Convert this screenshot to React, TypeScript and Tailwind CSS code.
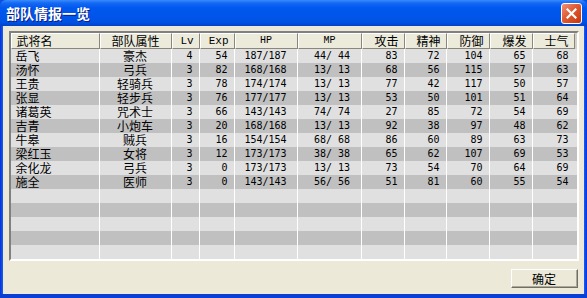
import React from "react";

type Row = [string, string, number, number, string, string, number, number, number, number, number];

const rows: Row[] = [
  ["岳飞", "豪杰", 4, 54, "187/187", " 44/ 44", 83, 72, 104, 65, 68],
  ["汤怀", "弓兵", 3, 82, "168/168", " 13/ 13", 68, 56, 115, 57, 63],
  ["王贵", "轻骑兵", 3, 78, "174/174", " 13/ 13", 77, 42, 117, 50, 57],
  ["张显", "轻步兵", 3, 76, "177/177", " 13/ 13", 53, 50, 101, 51, 64],
  ["诸葛英", "咒术士", 3, 66, "143/143", " 74/ 74", 27, 85, 72, 54, 69],
  ["吉青", "小炮车", 3, 20, "168/168", " 13/ 13", 92, 38, 97, 48, 62],
  ["牛皋", "贼兵", 3, 16, "154/154", " 68/ 68", 86, 60, 89, 63, 73],
  ["梁红玉", "女将", 3, 12, "173/173", " 38/ 38", 65, 62, 107, 69, 53],
  ["余化龙", "弓兵", 3, 0, "173/173", " 13/ 13", 73, 54, 70, 64, 69],
  ["施全", "医师", 3, 0, "143/143", " 56/ 56", 51, 81, 60, 55, 54],
];

const widths = ["w-[89px]", "w-[72px]", "w-[28px]", "w-[35px]", "w-[63px]", "w-[64px]", "w-[43px]", "w-[42px]", "w-[43px]", "w-[43px]", "w-[42px]"];
const aligns = ["l", "c", "r", "r", "c", "c", "r", "r", "r", "r", "r"];
const headers = ["武将名", "部队属性", "Lv", "Exp", "HP", "MP", "攻击", "精神", "防御", "爆发", "士气"];

const cjk = "font-['Noto_Sans_CJK_SC',sans-serif] text-[12px] leading-[12px]";
const num = "font-['DejaVu_Sans_Mono',monospace] text-[10px] leading-[10px]";
const latinHead = "font-['Liberation_Mono',monospace] text-[11px] leading-[11px]";
const smallHead = "font-['Liberation_Mono',monospace] text-[10px] leading-[10px]";

function alignClass(a: string, header: boolean) {
  if (a === "l") return "justify-start pl-[5px]";
  if (a === "c") return "justify-center";
  return header ? "justify-end pr-[5px]" : "justify-end pr-[6px]";
}

export default function App() {
  return (
    <div className="w-[587px] h-[298px] flex flex-col overflow-hidden bg-[#0b4ee0]">
      {/* Title bar */}
      <div className="h-[26px] flex items-center justify-between pl-[6px] pr-[5px] bg-[linear-gradient(to_bottom,#3b8cf9_0%,#1468f5_12%,#0058ee_30%,#0055ea_60%,#0052e4_85%,#0043c8_100%)] rounded-t-[6px]">
        <span className="text-white font-bold text-[14px] leading-[14px] font-['Noto_Sans_CJK_SC',sans-serif] [text-shadow:1px_1px_0_#0a1e8a]">
          部队情报一览
        </span>
        <div className="w-[21px] h-[21px] rounded-[3px] border border-white bg-[linear-gradient(135deg,#f09078_0%,#e05a32_45%,#c5350c_100%)] flex items-center justify-center">
          <svg width="11" height="11" viewBox="0 0 11 11">
            <path d="M1.5 1.5 L9.5 9.5 M9.5 1.5 L1.5 9.5" stroke="white" strokeWidth="2.2" strokeLinecap="square" />
          </svg>
        </div>
      </div>
      {/* Body */}
      <div className="flex-1 flex">
        <div className="w-[3px] bg-[linear-gradient(to_right,#0831d9,#1660f0)]" />
        <div className="flex-1 bg-[#ece9d8] flex flex-col pt-[5px] pl-[6px] pr-[5px]">
          {/* List box */}
          <div className="w-[570px] h-[230px] border-2 border-t-[#808080] border-l-[#808080] border-r-white border-b-white bg-[#d4d0c8] flex flex-col">
            {/* Header */}
            <div className="flex h-[16px]">
              {headers.map((h, i) => (
                <div
                  key={i}
                  className={`${widths[i]} h-[16px] flex items-center ${alignClass(aligns[i], true)} bg-[#ebeadb] border-t border-l border-t-white border-l-white border-r border-b border-r-[#8a877a] border-b-[#8a877a] text-black`}
                >
                  <span className={i === 2 || i === 3 ? latinHead : i === 4 || i === 5 ? smallHead : cjk}>{h}</span>
                </div>
              ))}
            </div>
            {/* Rows */}
            {Array.from({ length: 15 }).map((_, r) => {
              const row = rows[r];
              const bg = r % 2 === 0 ? "bg-[#e0e0e0]" : "bg-[#c0c0c0]";
              return (
                <div key={r} className={`flex h-[14px] ${bg}`}>
                  {widths.map((w, i) => (
                    <div
                      key={i}
                      className={`${w} h-[14px] flex items-center ${alignClass(aligns[i], false)} ${
                        i < 10 ? "border-r border-r-white" : ""
                      } text-black whitespace-pre`}
                    >
                      {row ? <span className={i < 2 ? cjk : num}>{String(row[i])}</span> : null}
                    </div>
                  ))}
                </div>
              );
            })}
          </div>
          {/* Button row */}
          <div className="flex justify-end mt-[8px] pr-px">
            <button className="w-[67px] h-[19px] bg-[#ece9d8] border border-t-white border-l-white border-r-[#716f64] border-b-[#716f64] shadow-[inset_-1px_-1px_0_#aca899] flex items-center justify-center text-black text-[12px] leading-[12px] font-['Noto_Sans_CJK_SC',sans-serif]">
              确定
            </button>
          </div>
        </div>
        <div className="w-[4px] bg-[linear-gradient(to_left,#0831d9,#1660f0)]" />
      </div>
      <div className="h-[4px] bg-[#0a3fd4]" />
    </div>
  );
}
